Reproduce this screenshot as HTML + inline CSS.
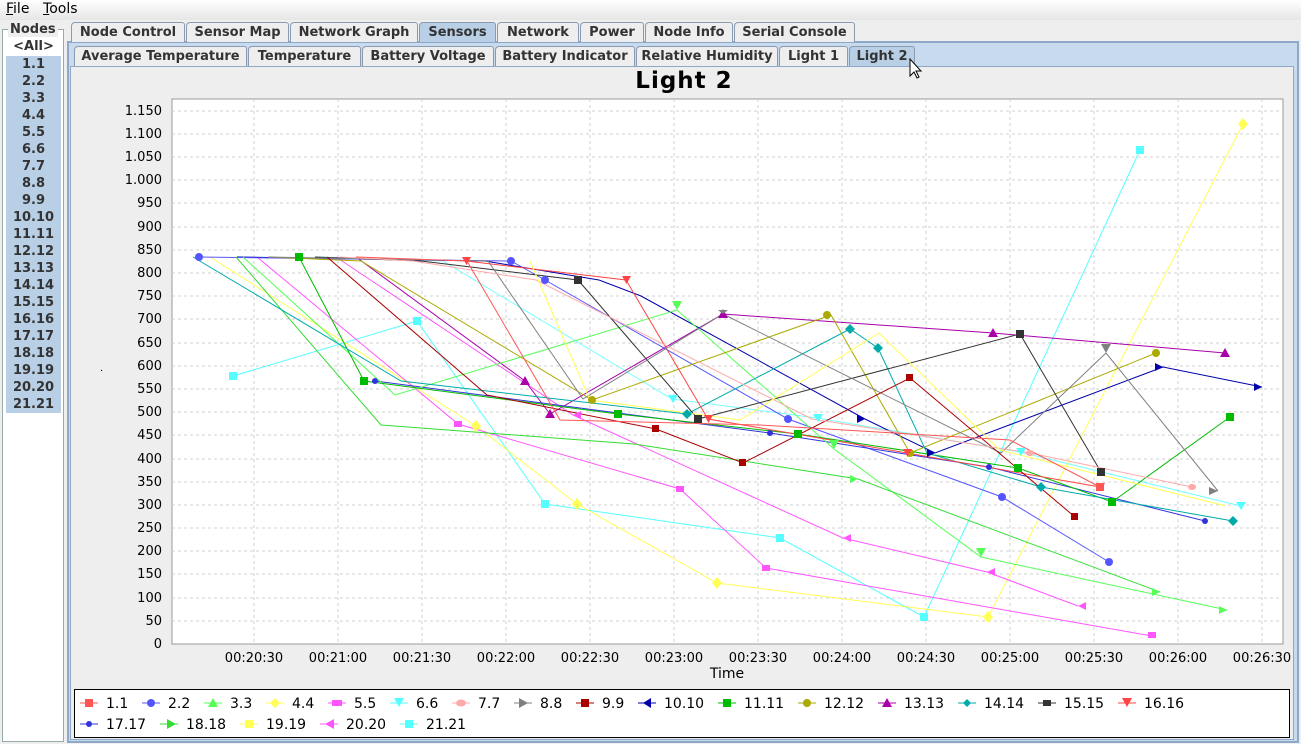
<!DOCTYPE html>
<html><head><meta charset="utf-8"><style>
*{margin:0;padding:0;box-sizing:border-box}
body{width:1301px;height:744px;background:#eeeeee;font-family:"DejaVu Sans","Liberation Sans",sans-serif;position:relative;overflow:hidden;font-size:13px}
.abs{position:absolute}
.menu{top:0;left:0;width:1301px;height:20px;background:linear-gradient(#fff,#e6e6e6)}
.menu span{position:absolute;top:1px;font-size:14px}
.tab{position:absolute;height:20px;border:1px solid #8a9bb0;border-bottom:none;background:#eeeeee;font-weight:bold;font-size:13px;color:#333;text-align:center;line-height:19px;border-radius:4px 3px 0 0}
.sel{background:#b8cfe5}
.node{position:absolute;left:6px;width:55px;height:17px;background:#b8cfe5;font-weight:bold;text-align:center;line-height:17px;color:#333}
</style></head><body>
<div class="abs menu"><span style="left:6px"><u>F</u>ile</span><span style="left:43px"><u>T</u>ools</span></div>
<div class="abs" style="left:2px;top:29px;width:62px;height:713px;border:1px solid #9aa;background:#fff"></div>
<div class="abs" style="left:8px;top:22px;background:#eee;font-weight:bold;padding:0 2px;color:#333">Nodes</div>
<div class="abs" style="left:6px;top:39px;width:55px;text-align:center;font-weight:bold;color:#333">&lt;All&gt;</div>
<div class="node" style="top:56px">1.1</div><div class="node" style="top:73px">2.2</div><div class="node" style="top:90px">3.3</div><div class="node" style="top:107px">4.4</div><div class="node" style="top:124px">5.5</div><div class="node" style="top:141px">6.6</div><div class="node" style="top:158px">7.7</div><div class="node" style="top:175px">8.8</div><div class="node" style="top:192px">9.9</div><div class="node" style="top:209px">10.10</div><div class="node" style="top:226px">11.11</div><div class="node" style="top:243px">12.12</div><div class="node" style="top:260px">13.13</div><div class="node" style="top:277px">14.14</div><div class="node" style="top:294px">15.15</div><div class="node" style="top:311px">16.16</div><div class="node" style="top:328px">17.17</div><div class="node" style="top:345px">18.18</div><div class="node" style="top:362px">19.19</div><div class="node" style="top:379px">20.20</div><div class="node" style="top:396px">21.21</div>

<div class="abs" style="left:67px;top:41px;width:1232px;height:702px;border:2px solid #8fa8c8;background:#c8daee"></div>
<div class="abs" style="left:70px;top:66px;width:1224px;height:674px;border:1px solid #8fa8c8;background:#eeeeee"></div>

<div class="tab" style="left:71px;top:22px;width:114px">Node Control</div>
<div class="tab" style="left:186px;top:22px;width:103px">Sensor Map</div>
<div class="tab" style="left:290px;top:22px;width:128px">Network Graph</div>
<div class="tab sel" style="left:419px;top:22px;width:77px">Sensors</div>
<div class="tab" style="left:497px;top:22px;width:82px">Network</div>
<div class="tab" style="left:580px;top:22px;width:64px">Power</div>
<div class="tab" style="left:645px;top:22px;width:88px">Node Info</div>
<div class="tab" style="left:734px;top:22px;width:121px">Serial Console</div>

<div class="tab" style="left:74px;top:46px;width:173px">Average Temperature</div>
<div class="tab" style="left:248px;top:46px;width:113px">Temperature</div>
<div class="tab" style="left:362px;top:46px;width:132px">Battery Voltage</div>
<div class="tab" style="left:495px;top:46px;width:140px">Battery Indicator</div>
<div class="tab" style="left:636px;top:46px;width:142px">Relative Humidity</div>
<div class="tab" style="left:779px;top:46px;width:69px">Light 1</div>
<div class="tab sel" style="left:849px;top:46px;width:66px">Light 2</div>

<div class="abs" style="left:0;top:68px;width:1368px;text-align:center;font-weight:bold;font-size:23px;letter-spacing:1px">Light 2</div>

<svg class="abs" style="left:0;top:0" width="1301" height="744" font-family="DejaVu Sans, Liberation Sans, sans-serif" font-size="13">
<rect x="172" y="99" width="1111" height="545" fill="#fff" stroke="#999"/>
<g stroke="#d0d0d0" stroke-dasharray="3,3">
<path d="M254 99V644M338 99V644M422 99V644M506 99V644M590 99V644M674 99V644M758 99V644M842 99V644M926 99V644M1010 99V644M1094 99V644M1178 99V644M1262 99V644"/>
<path d="M172 621H1283M172 598H1283M172 574H1283M172 551H1283M172 528H1283M172 505H1283M172 482H1283M172 459H1283M172 435H1283M172 412H1283M172 389H1283M172 366H1283M172 343H1283M172 319H1283M172 296H1283M172 273H1283M172 250H1283M172 227H1283M172 203H1283M172 180H1283M172 157H1283M172 134H1283M172 111H1283"/>
</g>
<g text-anchor="end">
<text x="162" y="648">0</text><text x="162" y="625">50</text><text x="162" y="602">100</text><text x="162" y="578">150</text><text x="162" y="555">200</text><text x="162" y="532">250</text><text x="162" y="509">300</text><text x="162" y="486">350</text><text x="162" y="463">400</text><text x="162" y="439">450</text><text x="162" y="416">500</text><text x="162" y="393">550</text><text x="162" y="370">600</text><text x="162" y="347">650</text><text x="162" y="323">700</text><text x="162" y="300">750</text><text x="162" y="277">800</text><text x="162" y="254">850</text><text x="162" y="231">900</text><text x="162" y="207">950</text><text x="162" y="184">1.000</text><text x="162" y="161">1.050</text><text x="162" y="138">1.100</text><text x="162" y="115">1.150</text>
</g>
<g text-anchor="middle">
<text x="254" y="662">00:20:30</text><text x="338" y="662">00:21:00</text><text x="422" y="662">00:21:30</text><text x="506" y="662">00:22:00</text><text x="590" y="662">00:22:30</text><text x="674" y="662">00:23:00</text><text x="758" y="662">00:23:30</text><text x="842" y="662">00:24:00</text><text x="926" y="662">00:24:30</text><text x="1010" y="662">00:25:00</text><text x="1094" y="662">00:25:30</text><text x="1178" y="662">00:26:00</text><text x="1262" y="662">00:26:30</text>
<text x="727" y="678" font-size="14">Time</text>
</g>
<g fill="none" stroke-width="1">
<polyline stroke="#55ffff" points="233,376 417,321 545,504 780,538 924,617 1140,150"/>
<polyline stroke="#ffff55" points="210,257 476,426 577,504 717,583 988,617 1243,124"/>
<polyline stroke="#55ffff" opacity=".8" points="316,257 443,261 672,399 817,418 1020,452 1241,506"/>
<polyline stroke="#ff55ff" points="257,257 458,424 680,489 766,568 1152,636"/>
<polyline stroke="#ff55ff" points="336,257 573,415 843,538 987,572 1078,606"/>
<polyline stroke="#aa00aa" points="356,257 525,381 550,414 723,314 993,333 1225,353"/>
<polyline stroke="#0000aa" points="237,257 485,261 599,280 641,296 865,419 935,453 1163,367 1262,387"/>
<polyline stroke="#5555ff" points="199,257 511,261 545,280 788,419 1002,497 1109,562"/>
<polyline stroke="#3333dd" points="375,381 770,433 989,467 1205,521"/>
<polyline stroke="#55ff55" points="243,257 395,395 677,310 834,449 981,557 1227,610"/>
<polyline stroke="#33dd33" points="236,257 381,425 634,444 858,479 1160,592"/>
<polyline stroke="#00bb00" points="299,257 364,381 618,414 798,434 1018,468 1112,502 1230,417"/>
<polyline stroke="#aaaa00" points="268,257 361,261 592,400 831,315 910,453 1156,353"/>
<polyline stroke="#00aaaa" points="193,257 401,381 687,414 850,329 878,348 927,453 1041,487 1233,521"/>
<polyline stroke="#333333" points="315,257 421,261 578,280 698,419 1020,334 1101,472"/>
<polyline stroke="#ff4444" points="466,261 626,280 708,419 907,453 1100,487"/>
<polyline stroke="#808080" points="268,257 488,261 583,399 723,314 1001,453 1106,353 1218,491"/>
<polyline stroke="#aa0000" points="327,257 487,395 656,429 743,463 910,378 1075,517"/>
<polyline stroke="#ffaaaa" points="340,257 413,261 536,280 812,419 1030,453 1192,487"/>
<polyline stroke="#ffff55" points="530,261 590,400 740,420 879,333 1000,450 1226,506"/>
<polyline stroke="#ff5555" points="356,257 467,261 560,420 760,425 1010,440 1100,487"/>
</g>
<g>
<rect x="229" y="372" width="8" height="8" fill="#55ffff"/><rect x="413" y="317" width="8" height="8" fill="#55ffff"/><rect x="541" y="500" width="8" height="8" fill="#55ffff"/><rect x="776" y="534" width="8" height="8" fill="#55ffff"/><rect x="920" y="613" width="8" height="8" fill="#55ffff"/><rect x="1136" y="146" width="8" height="8" fill="#55ffff"/>
<rect x="295" y="253" width="8" height="8" fill="#00bb00"/><rect x="360" y="377" width="8" height="8" fill="#00bb00"/><rect x="614" y="410" width="8" height="8" fill="#00bb00"/><rect x="794" y="430" width="8" height="8" fill="#00bb00"/><rect x="1014" y="464" width="8" height="8" fill="#00bb00"/><rect x="1108" y="498" width="8" height="8" fill="#00bb00"/><rect x="1226" y="413" width="8" height="8" fill="#00bb00"/>
<circle cx="827" cy="315" r="4" fill="#aaaa00"/><circle cx="1156" cy="353" r="4" fill="#aaaa00"/><circle cx="910" cy="453" r="4" fill="#aaaa00"/><circle cx="592" cy="400" r="4" fill="#aaaa00"/>
<circle cx="1109" cy="562" r="4" fill="#5555ff"/><circle cx="1002" cy="497" r="4" fill="#5555ff"/><circle cx="788" cy="419" r="4" fill="#5555ff"/><circle cx="545" cy="280" r="4" fill="#5555ff"/><circle cx="199" cy="257" r="4" fill="#5555ff"/><circle cx="511" cy="261" r="4" fill="#5555ff"/>
<path d="M1225 348l5 9h-10zM993 328l5 9h-10zM723 309l5 9h-10zM525 376l5 9h-10zM550 409l5 9h-10z" fill="#aa00aa"/>
<path d="M1262 387l-8-4v8zM1163 367l-8-4v8zM935 453l-8-4v8zM865 419l-8-4v8z" fill="#0000aa"/>
<rect x="1097" y="468" width="8" height="8" fill="#333"/><rect x="1016" y="330" width="8" height="8" fill="#333"/><rect x="694" y="415" width="8" height="8" fill="#333"/><rect x="574" y="276" width="8" height="8" fill="#333"/>
<rect x="1071" y="513" width="7" height="7" fill="#aa0000"/><rect x="906" y="374" width="7" height="7" fill="#aa0000"/><rect x="739" y="459" width="7" height="7" fill="#aa0000"/><rect x="652" y="425" width="7" height="7" fill="#aa0000"/>
<path d="M1096 483h9l-4.5 8zM903 449h9l-4.5 8zM704 415h9l-4.5 8zM622 276h9l-4.5 8zM462 257h9l-4.5 8z" fill="#ff4444"/>
<path d="M1218 491l-9-4v8zM1106 353l-5 -9h10zM723 314l-5-4h10z" fill="#808080"/>
<path d="M1227 610l-8-4v8zM1160 592l-8-4v8zM858 479l-8-4v8zM981 557l-5-9h10zM834 449l-5-9h10zM677 310l-5-9h10z" fill="#55ff55"/>
<path d="M1233 516l5 5-5 5-5-5zM1041 482l5 5-5 5-5-5zM878 343l5 5-5 5-5-5zM850 324l5 5-5 5-5-5zM687 409l5 5-5 5-5-5z" fill="#00aaaa"/>
<path d="M1078 606l8-4v8zM987 572l8-4v8zM843 538l8-4v8zM573 415l8-4v8z" fill="#ff55ff"/>
<rect x="1148" y="632" width="8" height="6" fill="#ff55ff"/><rect x="762" y="565" width="8" height="6" fill="#ff55ff"/><rect x="676" y="486" width="8" height="6" fill="#ff55ff"/><rect x="454" y="421" width="8" height="6" fill="#ff55ff"/>
<path d="M1243 118l5 6-5 6-5-6zM988 611l5 6-5 6-5-6zM717 577l5 6-5 6-5-6zM577 498l5 6-5 6-5-6zM476 420l5 6-5 6-5-6z" fill="#ffff55"/>
<path d="M1236 502h10l-5 8zM1016 448h10l-5 8zM813 414h10l-5 8zM668 395h10l-5 8z" fill="#55ffff"/>
<circle cx="1205" cy="521" r="3" fill="#3333dd"/><circle cx="989" cy="467" r="3" fill="#3333dd"/><circle cx="770" cy="433" r="3" fill="#3333dd"/><circle cx="375" cy="381" r="3" fill="#3333dd"/>
<path d="M1192 484a4 3 0 1 0 .1 0zM1030 450a4 3 0 1 0 .1 0z" fill="#ffaaaa"/>
<rect x="1096" y="483" width="8" height="8" fill="#ff5555"/>
</g>
<text x="100" y="374" font-size="10">·</text>
<rect x="74.5" y="689.5" width="1215" height="48" fill="#fff" stroke="#000"/>
<g font-size="14">
<path d="M80 703h18" stroke="#ff5555"/><rect x="85" y="699" width="8" height="8" fill="#ff5555"/><text x="106" y="708">1.1</text>
<path d="M142 703h18" stroke="#5555ff"/><circle cx="151" cy="703" r="4" fill="#5555ff"/><text x="168" y="708">2.2</text>
<path d="M204 703h18" stroke="#55ff55"/><path d="M213 698l5 9h-10z" fill="#55ff55"/><text x="230" y="708">3.3</text>
<path d="M266 703h18" stroke="#ffff55"/><path d="M275 698l5 5-5 5-5-5z" fill="#ffff55"/><text x="292" y="708">4.4</text>
<path d="M328 703h18" stroke="#ff55ff"/><rect x="332" y="700" width="10" height="6" fill="#ff55ff"/><text x="354" y="708">5.5</text>
<path d="M390 703h18" stroke="#55ffff"/><path d="M394 698h10l-5 9z" fill="#55ffff"/><text x="416" y="708">6.6</text>
<path d="M452 703h18" stroke="#ffaaaa"/><ellipse cx="461" cy="703" rx="5" ry="3.5" fill="#ffaaaa"/><text x="478" y="708">7.7</text>
<path d="M514 703h18" stroke="#808080"/><path d="M528 703l-9-5v10z" fill="#808080"/><text x="540" y="708">8.8</text>
<path d="M576 703h18" stroke="#aa0000"/><rect x="581" y="699" width="8" height="8" fill="#aa0000"/><text x="602" y="708">9.9</text>
<path d="M638 703h18" stroke="#0000aa"/><path d="M643 703l8-5v10z" fill="#0000aa"/><text x="664" y="708">10.10</text>
<path d="M718 703h18" stroke="#00bb00"/><rect x="723" y="699" width="8" height="8" fill="#00bb00"/><text x="744" y="708">11.11</text>
<path d="M798 703h18" stroke="#aaaa00"/><circle cx="807" cy="703" r="4" fill="#aaaa00"/><text x="824" y="708">12.12</text>
<path d="M878 703h18" stroke="#aa00aa"/><path d="M887 698l5 9h-10z" fill="#aa00aa"/><text x="904" y="708">13.13</text>
<path d="M958 703h18" stroke="#00aaaa"/><path d="M967 699l4 4-4 4-4-4z" fill="#00aaaa"/><text x="984" y="708">14.14</text>
<path d="M1038 703h18" stroke="#333"/><rect x="1043" y="700" width="8" height="6" fill="#333"/><text x="1064" y="708">15.15</text>
<path d="M1118 703h18" stroke="#ff4444"/><path d="M1122 698h10l-5 9z" fill="#ff4444"/><text x="1144" y="708">16.16</text>
<path d="M80 724h18" stroke="#3333dd"/><circle cx="89" cy="724" r="3" fill="#3333dd"/><text x="106" y="729">17.17</text>
<path d="M160 724h18" stroke="#33dd33"/><path d="M176 724l-9-5v10z" fill="#33dd33"/><text x="186" y="729">18.18</text>
<path d="M240 724h18" stroke="#ffff55"/><rect x="245" y="720" width="8" height="8" fill="#ffff55"/><text x="266" y="729">19.19</text>
<path d="M320 724h18" stroke="#ff55ff"/><path d="M325 724l9-5v10z" fill="#ff55ff"/><text x="346" y="729">20.20</text>
<path d="M400 724h18" stroke="#55ffff"/><rect x="405" y="720" width="8" height="8" fill="#55ffff"/><text x="426" y="729">21.21</text>
</g>
<path d="M910 59v17l4-4 3 6 2-1-3-6h5z" fill="#fff" stroke="#000"/>
</svg>
</body></html>
